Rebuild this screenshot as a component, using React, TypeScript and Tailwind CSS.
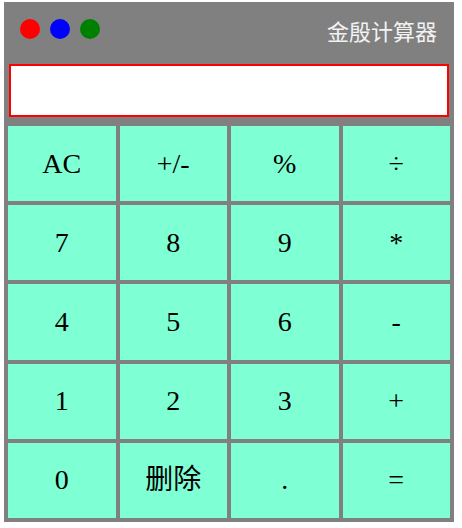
import * as React from 'react'

const keys = [
  'AC', '+/-', '%', '÷',
  '7', '8', '9', '*',
  '4', '5', '6', '-',
  '1', '2', '3', '+',
  '0', '删除', '.', '=',
]

export default function App() {
  const [value, setValue] = React.useState('')

  return (
    <div className="bg-white w-[462px] h-[528px] pt-[2px] pl-[4px]">
      <div className="w-[450px] h-[520px] bg-[#808080] flex flex-col">
        {/* Title bar */}
        <div className="h-[56px] flex items-center justify-between pl-[16px] pr-[17px]">
          <div className="flex items-center gap-[10px] -mt-[2px]">
            <span className="block w-[20px] h-[20px] rounded-full bg-[#ff0000]" />
            <span className="block w-[20px] h-[20px] rounded-full bg-[#0000ff]" />
            <span className="block w-[20px] h-[20px] rounded-full bg-[#008000]" />
          </div>
          <span className="text-[22px] leading-none text-[#f2f2f2] font-['Noto_Sans_CJK_SC',sans-serif]">
            金殷计算器
          </span>
        </div>

        {/* Display */}
        <input
          value={value}
          onChange={(e) => setValue(e.target.value)}
          className="ml-[5px] mt-[6px] w-[440px] h-[53px] bg-white border-2 border-[#ff0000] outline-none px-2 text-right text-[28px] font-['Liberation_Serif',serif]"
        />

        {/* Keypad */}
        <div className="mt-[9px] mx-[4px] grid grid-cols-4 grid-rows-5 gap-[4px] h-[392px]">
          {keys.map((k) => (
            <button
              key={k}
              onClick={() => setValue((v) => (k === 'AC' ? '' : v + k))}
              className="bg-[#7fffd4] flex items-center justify-center text-[28px] text-black font-['Liberation_Serif','Noto_Sans_CJK_SC',serif]"
            >
              {k}
            </button>
          ))}
        </div>
      </div>
    </div>
  )
}
